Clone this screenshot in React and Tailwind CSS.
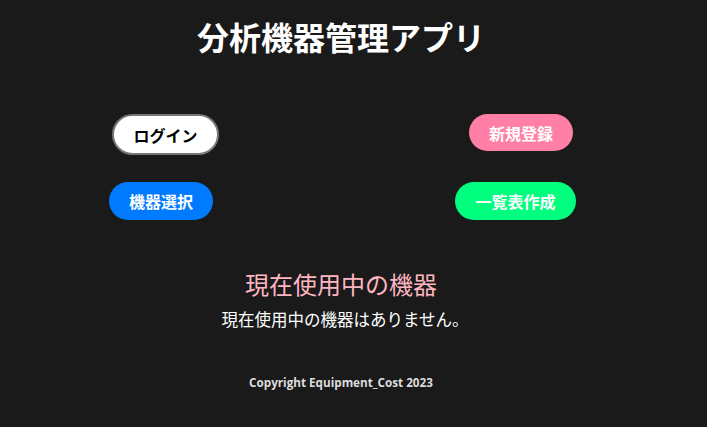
export default function App() {
  const jp = { fontFamily: '"Noto Sans CJK JP", "Noto Sans", sans-serif' };
  return (
    <div className="min-h-[427px] w-full bg-[#1a1a1a] text-white" style={jp}>
      <div className="w-[682px]">
        <h1 className="pt-[12px] text-center text-[32px] font-bold leading-[48px]">分析機器管理アプリ</h1>
        <div className="mt-[54px] flex flex-col gap-[27px]">
          <div className="flex pl-[75px]">
            <div className="flex w-[181px] justify-center">
              <button className="h-[41px] rounded-full border-2 border-[#777] bg-white px-[19px] text-[16px] font-bold text-black">ログイン</button>
            </div>
            <div className="ml-[175px] flex w-[180px] justify-center">
              <button className="h-[37px] rounded-full bg-[#ff7fa7] px-[20px] text-[16px] font-bold text-white">新規登録</button>
            </div>
          </div>
          <div className="flex pl-[73px]">
            <div className="flex w-[176px] justify-center">
              <button className="h-[38px] rounded-full bg-[#007bff] px-[20px] text-[16px] font-bold text-white">機器選択</button>
            </div>
            <div className="ml-[174px] flex w-[185px] justify-center">
              <button className="h-[38px] rounded-full bg-[#00ff7f] px-[20px] text-[16px] font-bold text-white">一覧表作成</button>
            </div>
          </div>
        </div>
        <div className="mt-[48px] text-center">
          <h2 className="text-[24px] leading-[32px] text-[#ffb6c1]">現在使用中の機器</h2>
          <p className="mt-[7px] pl-[8px] text-[16.5px] leading-[24px]">現在使用中の機器はありません。</p>
        </div>
        <footer className="mt-[43px] text-center text-[11.7px] font-bold text-[#ddd]" style={{ fontFamily: '"Open Sans", "DejaVu Sans", sans-serif' }}>
          Copyright Equipment_Cost 2023
        </footer>
      </div>
    </div>
  );
}
